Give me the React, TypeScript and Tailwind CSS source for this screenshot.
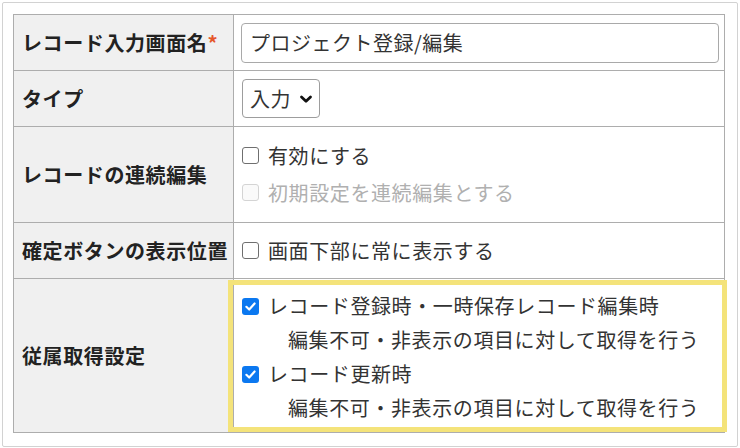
import React from "react";

const FONT = { fontFamily: '"Noto Sans CJK JP", "Noto Sans", sans-serif' };

function Label({ children }: { children: React.ReactNode }) {
  return (
    <div className="flex items-center border-r border-b border-[#adadad] bg-[#f0f0f0] pl-2 text-[20px] font-bold tracking-[0.6px] text-[#222]">
      {children}
    </div>
  );
}

function Box({ checked, disabled }: { checked?: boolean; disabled?: boolean }) {
  if (checked) {
    return (
      <span className="flex h-[17px] w-[17px] shrink-0 items-center justify-center rounded-[3px] bg-[#0b78f0]">
        <svg width="13" height="13" viewBox="0 0 12 12">
          <path d="M2.2 6.3 L4.8 8.8 L9.8 3.2" fill="none" stroke="#fff" strokeWidth="2" strokeLinecap="round" strokeLinejoin="round" />
        </svg>
      </span>
    );
  }
  return (
    <span
      className={
        disabled
          ? "h-[17px] w-[17px] shrink-0 rounded-[3px] border-[1.5px] border-[#d4d4d4] bg-[#fafafa]"
          : "h-[17px] w-[17px] shrink-0 rounded-[3px] border-[1.5px] border-[#6f6f6f] bg-white"
      }
    />
  );
}

function Check({
  checked,
  disabled,
  children,
}: {
  checked?: boolean;
  disabled?: boolean;
  children: React.ReactNode;
}) {
  return (
    <div className="flex items-center gap-[9px]">
      <Box checked={checked} disabled={disabled} />
      <span className={disabled ? "text-[#b0b0b0]" : "text-[#333]"}>{children}</span>
    </div>
  );
}

export default function App() {
  return (
    <div className="h-[448px] w-[740px] bg-white p-[2px]" style={FONT}>
      <div className="h-[445px] w-[736px] rounded-[2px] border border-[#d2d2d2] pl-[10px] pt-[11px]">
        <div className="grid w-[712px] grid-cols-[220px_491px] grid-rows-[56px_56px_96px_56px_154px] border-l border-t border-[#adadad]">
          <Label>
            レコード入力画面名<span className="text-[#e5562a]">*</span>
          </Label>
          <div className="flex items-center border-r border-b border-[#adadad] pl-[7px]">
            <input
              readOnly
              defaultValue="プロジェクト登録/編集"
              className="h-10 w-[478px] rounded-[4px] border border-[#a9a9a9] pl-2 text-[20px] tracking-[0.5px] text-[#333] outline-none"
            />
          </div>

          <Label>タイプ</Label>
          <div className="flex items-center border-r border-b border-[#adadad] pl-2">
            <div className="flex h-[39px] w-[78px] items-center rounded-[4px] border border-[#9d9d9d] pl-[7px] text-[20px] tracking-[0.5px] text-[#333]">
              入力
              <svg width="14" height="12" viewBox="0 0 14 12" className="ml-[8px]">
                <path d="M2.5 4 L7 8.3 L11.5 4" fill="none" stroke="#111" strokeWidth="2.8" strokeLinecap="round" strokeLinejoin="round" />
              </svg>
            </div>
          </div>

          <Label>レコードの連続編集</Label>
          <div className="flex flex-col border-r border-b border-[#adadad] pl-2 pt-[10px] text-[20px] leading-[37px] tracking-[0.6px]">
            <Check>有効にする</Check>
            <Check disabled>初期設定を連続編集とする</Check>
          </div>

          <Label>確定ボタンの表示位置</Label>
          <div className="flex items-center border-r border-b border-[#adadad] pl-2 text-[20px] tracking-[0.6px]">
            <Check>画面下部に常に表示する</Check>
          </div>

          <Label>従属取得設定</Label>
          <div className="relative flex flex-col border-r border-b border-[#adadad] pl-2 pt-[10px] text-[20px] leading-[34px] tracking-[0.6px] text-[#333]">
            <div className="pointer-events-none absolute -left-[6px] -right-[3px] top-px bottom-0 border-[5px] border-[#f4e37a]" />
            <Check checked>レコード登録時・一時保存レコード編集時</Check>
            <div className="ml-[46px]">編集不可・非表示の項目に対して取得を行う</div>
            <Check checked>レコード更新時</Check>
            <div className="ml-[46px]">編集不可・非表示の項目に対して取得を行う</div>
          </div>
        </div>
      </div>
    </div>
  );
}
